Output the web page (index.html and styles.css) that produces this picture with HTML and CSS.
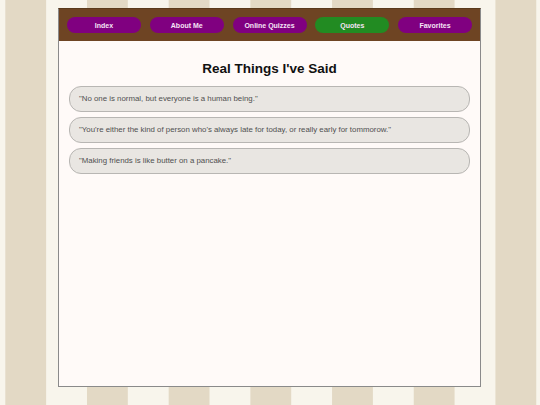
FILE: index.html
```html
<!DOCTYPE html>
<html>
<head>
<meta charset="utf-8">
<link rel="stylesheet" href="styles.css">
</head>
<body>
<div class="page">
  <nav class="nav">
    <a class="btn">Index</a>
    <a class="btn">About Me</a>
    <a class="btn">Online Quizzes</a>
    <a class="btn active">Quotes</a>
    <a class="btn">Favorites</a>
  </nav>
  <main class="content">
    <h1 class="title">Real Things I've Said</h1>
    <div class="quote">"No one is normal, but everyone is a human being."</div>
    <div class="quote">"You're either the kind of person who's always late for today, or really early for tommorow."</div>
    <div class="quote">"Making friends is like butter on a pancake."</div>
  </main>
</div>
</body>
</html>
```
FILE: styles.css
```css
html, body {
  margin: 0;
  padding: 0;
}
body {
  height: 405px;
  overflow: hidden;
  font-family: "Liberation Sans", Arial, sans-serif;
  background-color: #f8f5ec;
  background-image: linear-gradient(90deg, #e3d9c5 50%, #f8f5ec 50%);
  background-size: 81.7px 100%;
  background-position: 5.3px 0;
  padding-top: 8px;
}
.page {
  width: 421px;
  height: 377px;
  margin-left: 58px;
  background: #fffaf8;
  border: 1px solid #8a8a8a;
  border-top-color: #5a3a1c;
  display: flex;
  flex-direction: column;
}
.nav {
  background: #6e4423;
  height: 32px;
  padding: 0 8px;
  display: flex;
  align-items: center;
  justify-content: space-between;
}
.btn {
  width: 74px;
  height: 16px;
  border-radius: 8px;
  background: #800080;
  color: #f6e4f6;
  font-size: 7px;
  font-weight: bold;
  display: flex;
  align-items: center;
  justify-content: center;
}
.btn.active {
  background: #228b22;
}
.content {
  padding: 0 10px;
}
.title {
  margin: 20px 0 9px;
  text-align: center;
  font-size: 13.5px;
  line-height: 16px;
  font-weight: bold;
  color: #111;
}
.quote {
  box-sizing: border-box;
  height: 25.5px;
  margin-bottom: 5.5px;
  border: 1px solid #b8b6b3;
  border-radius: 12px;
  background: #e9e6e2;
  color: #505050;
  font-size: 7.85px;
  display: flex;
  align-items: center;
  padding-left: 9px;
}
```
